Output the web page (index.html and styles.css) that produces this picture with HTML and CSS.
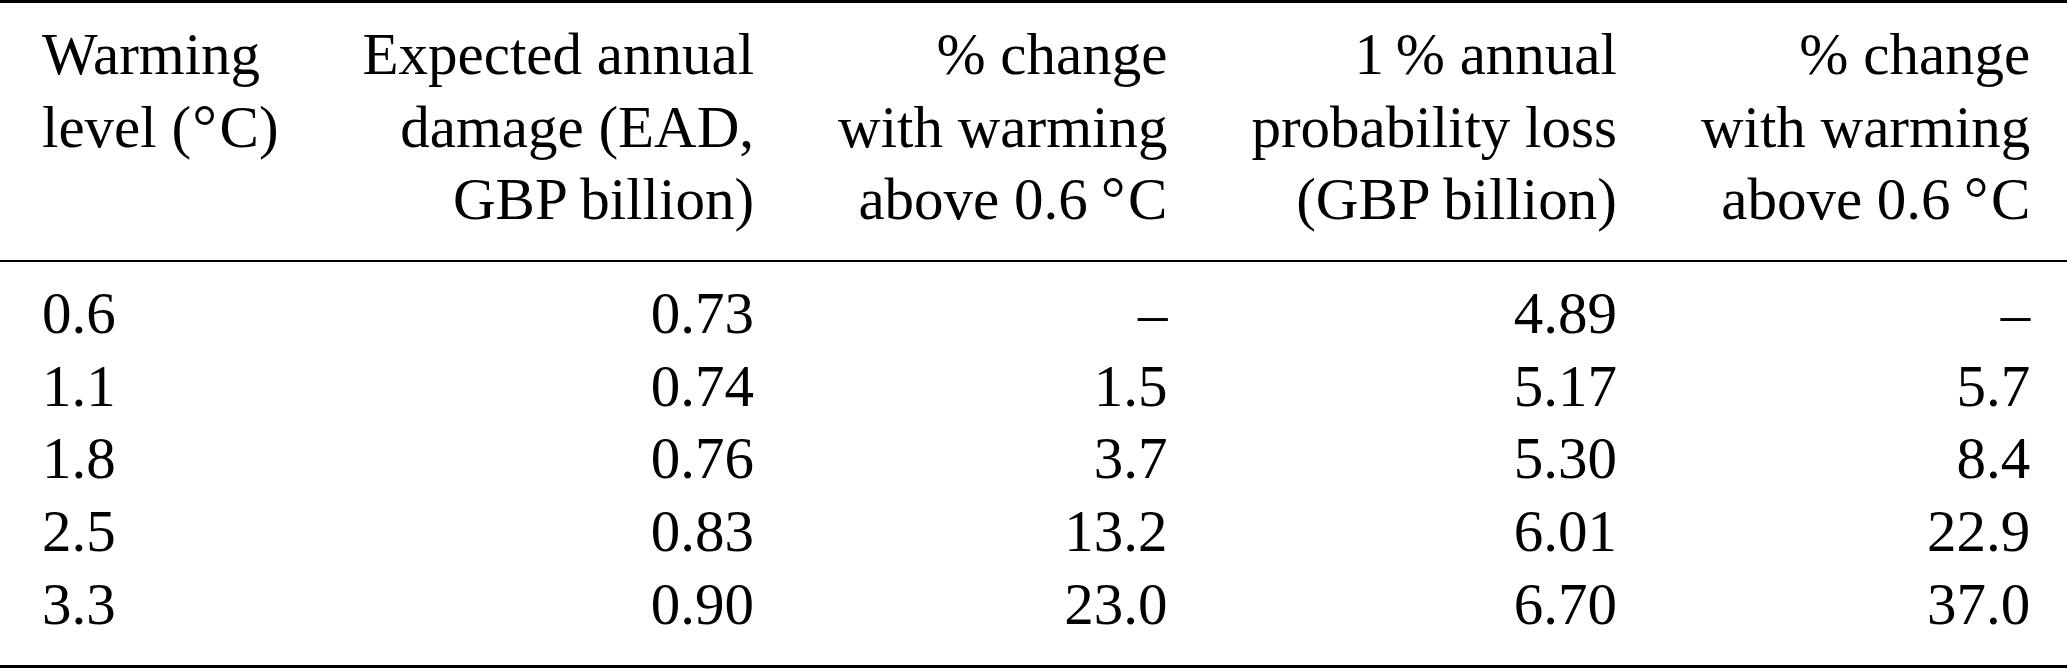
FILE: index.html
```html
<!DOCTYPE html>
<html lang="en">
<head>
<meta charset="utf-8">
<title>Warming level table</title>
<link rel="stylesheet" href="styles.css">
</head>
<body>
<table class="data">
  <thead>
    <tr>
      <th class="left">Warming<br>level (<span class="deg">°</span>C)</th>
      <th>Expected annual<br>damage (EAD,<br>GBP billion)</th>
      <th>% change<br>with warming<br>above 0.6&#8201;<span class="deg">°</span>C</th>
      <th>1&#8201;% annual<br>probability loss<br>(GBP billion)</th>
      <th>% change<br>with warming<br>above 0.6&#8201;<span class="deg">°</span>C</th>
    </tr>
  </thead>
  <tbody>
    <tr><td class="left">0.6</td><td>0.73</td><td>–</td><td>4.89</td><td>–</td></tr>
    <tr><td class="left">1.1</td><td>0.74</td><td>1.5</td><td>5.17</td><td>5.7</td></tr>
    <tr><td class="left">1.8</td><td>0.76</td><td>3.7</td><td>5.30</td><td>8.4</td></tr>
    <tr><td class="left">2.5</td><td>0.83</td><td>13.2</td><td>6.01</td><td>22.9</td></tr>
    <tr><td class="left">3.3</td><td>0.90</td><td>23.0</td><td>6.70</td><td>37.0</td></tr>
  </tbody>
</table>
</body>
</html>
```

FILE: styles.css
```css
html, body {
  margin: 0;
  padding: 0;
  background: #ffffff;
}

body {
  font-family: "Liberation Serif", "Times New Roman", serif;
  font-size: 59px;
  color: #000000;
}

.data {
  width: 100%;
  border-collapse: separate;
  border-spacing: 0;
}

.data th {
  font-weight: normal;
  vertical-align: top;
  text-align: right;
  white-space: nowrap;
  line-height: 72.5px;
  padding: 15px 42px 24.5px;
  border-top: 3px solid #000000;
  border-bottom: 2px solid #000000;
}

.data td {
  text-align: right;
  white-space: nowrap;
  line-height: 72.7px;
  padding: 0 42px;
}

.data tbody tr:first-child td {
  padding-top: 14.8px;
}

.data tbody tr:last-child td {
  padding-bottom: 24.7px;
  border-bottom: 3px solid #000000;
}

.data .left {
  text-align: left;
}

.deg {
  font-size: 1.05em;
  line-height: 0;
  margin: 0 0.04em 0 0.02em;
}
```
